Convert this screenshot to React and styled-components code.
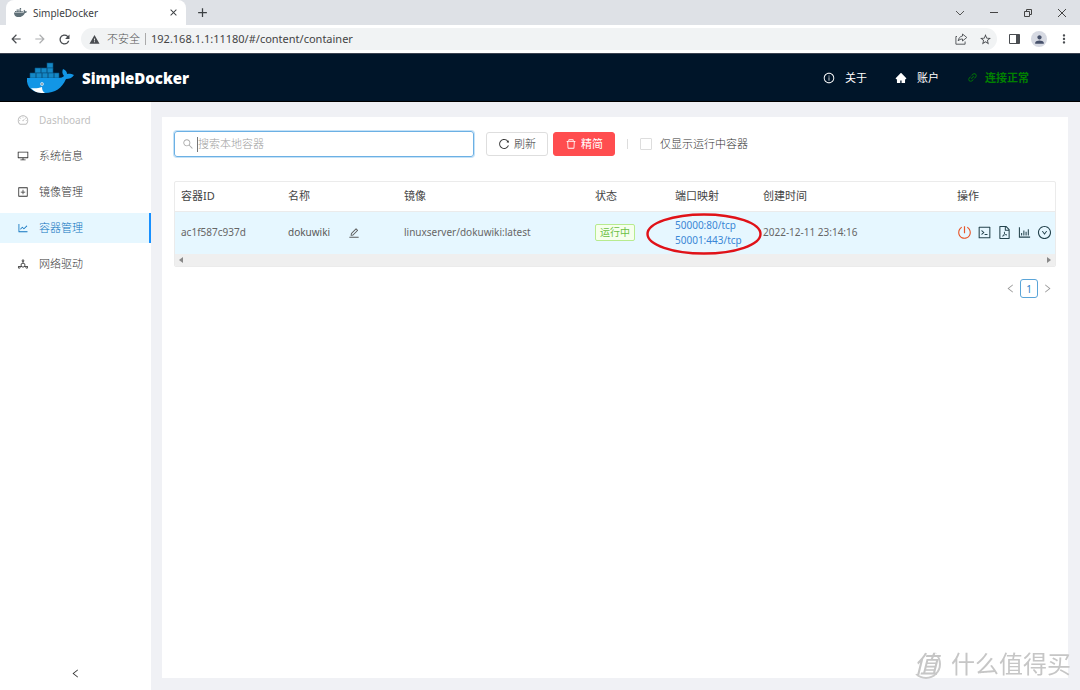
import React, { useState } from "react";
import styled, { createGlobalStyle, css } from "styled-components";
import {
    AiFillHome,
    AiOutlineBarChart,
    AiOutlineCode,
    AiOutlineDashboard,
    AiOutlineDelete,
    AiOutlineDeploymentUnit,
    AiOutlineDesktop,
    AiOutlineDownCircle,
    AiOutlineEdit,
    AiOutlineFilePdf,
    AiOutlineInfoCircle,
    AiOutlineLeft,
    AiOutlineLineChart,
    AiOutlineLink,
    AiOutlinePlusSquare,
    AiOutlinePoweroff,
    AiOutlineReload,
    AiOutlineRight,
    AiOutlineSearch
} from "react-icons/ai";
import { FaDocker } from "react-icons/fa";
import {
    MdAdd,
    MdArrowBack,
    MdArrowForward,
    MdClose,
    MdMoreVert,
    MdPerson,
    MdRefresh,
    MdStarBorder,
    MdWarning
} from "react-icons/md";

const GlobalStyle = createGlobalStyle`
    * {
        box-sizing: border-box;
    }
    body {
        margin: 0;
        font-family: "Noto Sans", "Noto Sans CJK SC", sans-serif;
        font-size: 11px;
        line-height: 16px;
        color: #666;
        background: #f0f1f5;
    }
    button, input {
        font: inherit;
        color: inherit;
    }
    button {
        padding: 0;
        border: 0;
        background: none;
        cursor: pointer;
    }
    a {
        color: inherit;
        text-decoration: none;
    }
    svg {
        display: block;
        flex: none;
    }
`;

const Page = styled.div`
    min-height: 100vh;
    display: flex;
    flex-direction: column;
`;

/* browser */

const TabStrip = styled.div`
    height: 25px;
    display: flex;
    align-items: center;
    padding-left: 6px;
    background: #dee1e6;
    color: #3c4043;
`;

const Tab = styled.div`
    width: 180px;
    height: 25px;
    display: flex;
    align-items: center;
    gap: 6px;
    padding: 0 6px 0 8px;
    border-radius: 8px 8px 0 0;
    background: #fff;
    font-size: 10px;
    span {
        flex: 1;
    }
`;

const NewTab = styled.button`
    margin-left: 9px;
`;

const WindowButtons = styled.div`
    margin-left: auto;
    display: flex;
    gap: 22px;
    padding-right: 12px;
    button {
        width: 12px;
        height: 12px;
    }
`;

const Toolbar = styled.div`
    height: 28px;
    display: flex;
    align-items: center;
    gap: 10px;
    padding: 0 9px;
    background: #fff;
    color: #4a4d51;
`;

const IconButton = styled.button`
    width: 14px;
    display: flex;
    align-items: center;
    justify-content: center;
    opacity: ${props => (props.$faded ? 0.45 : 1)};
`;

const AddressBar = styled.div`
    flex: 1;
    height: 22px;
    display: flex;
    align-items: center;
    padding: 0 5px 0 8px;
    border-radius: 11px;
    background: #f1f3f4;
`;

const Insecure = styled.span`
    margin-left: 7px;
    padding-right: 5px;
    border-right: 1px solid #aaa;
    line-height: 12px;
    color: #555;
    font-weight: 300;
`;

const Url = styled.input`
    flex: 1;
    min-width: 0;
    margin-left: 5px;
    padding: 0;
    border: 0;
    outline: 0;
    background: none;
    color: #444;
`;

const AddressActions = styled.div`
    display: flex;
    gap: 10px;
`;

const Avatar = styled.button`
    width: 16px;
    height: 16px;
    display: grid;
    place-items: center;
    border-radius: 50%;
    background: #d6d9e2;
    color: #46506a;
`;

/* app header */

const Header = styled.header`
    height: 49px;
    display: flex;
    align-items: center;
    padding: 0 51px 0 26px;
    border-top: 1px solid #3b4250;
    border-bottom: 1px solid #000;
    background: #001529;
    color: #fff;
`;

const Brand = styled.h1`
    margin: 0 0 0 8px;
    font-family: "Open Sans", "Noto Sans", sans-serif;
    font-size: 15px;
    font-weight: 800;
`;

const HeaderNav = styled.nav`
    margin-left: auto;
    display: flex;
    gap: 28px;
`;

const HeaderLink = styled.a`
    display: flex;
    align-items: center;
    gap: 10px;
    ${props => props.$ok && css`
        gap: 7px;
        color: #008000;
        font-weight: 700;
    `}
`;

/* side menu */

const Body = styled.div`
    flex: 1;
    display: flex;
`;

const Sidebar = styled.aside`
    width: 151px;
    display: flex;
    flex-direction: column;
    align-items: stretch;
    padding-top: 3px;
    background: #fff;
`;

const MenuLink = styled.a`
    height: 30px;
    display: flex;
    align-items: center;
    gap: 10px;
    margin-bottom: 6px;
    padding-left: 17px;
    border-right: 2px solid transparent;
    color: #333;
    font-weight: 300;
    ${props => props.$disabled && css`
        color: #bfbfbf;
        font-size: 10px;
        font-weight: 400;
    `}
    ${props => props.$active && css`
        border-color: #1890ff;
        background: #e6f7ff;
        color: #0f74c0;
    `}
`;

const Collapse = styled.button`
    height: 34px;
    display: grid;
    place-items: center;
    margin-top: auto;
    color: #333;
`;

/* content */

const Content = styled.main`
    flex: 1;
    display: flex;
    min-width: 0;
    padding: 15px 12px 12px 11px;
`;

const Card = styled.section`
    flex: 1;
    min-width: 0;
    padding: 14px 12px;
    background: #fff;
`;

const Filters = styled.div`
    display: flex;
    align-items: center;
    margin-bottom: 24px;
    font-weight: 300;
`;

const SearchBox = styled.label`
    flex: 0 1 300px;
    height: 26px;
    display: flex;
    align-items: center;
    gap: 3px;
    margin-right: 12px;
    padding: 0 7px;
    border: 1px solid #6cb0e4;
    border-radius: 3px;
    box-shadow: 0 0 0 1px #c5e2f7;
    color: #aaa;
    input {
        flex: 1;
        min-width: 0;
        padding: 0;
        border: 0;
        outline: 0;
        color: #555;
    }
    input::placeholder {
        color: #a0a0a0;
    }
`;

const Caret = styled.i`
    width: 1px;
    height: 15px;
    margin-right: -3px;
    background: #777;
`;

const Button = styled.button`
    width: 62px;
    height: 24px;
    display: flex;
    align-items: center;
    justify-content: center;
    gap: 4px;
    margin-right: 5px;
    border: 1px solid ${props => (props.$danger ? "#ff4d4f" : "#dedede")};
    border-radius: 3px;
    background: ${props => (props.$danger ? "#ff4d4f" : "#fff")};
    color: ${props => (props.$danger ? "#fff" : "#333")};
    font-weight: ${props => (props.$danger ? 400 : 300)};
`;

const Divider = styled.span`
    width: 1px;
    height: 10px;
    margin: 0 12px 0 7px;
    background: #ddd;
`;

const Check = styled.label`
    display: flex;
    align-items: center;
    gap: 8px;
    color: #333;
    input {
        appearance: none;
        width: 12px;
        height: 12px;
        margin: 0;
        border: 1px solid #ddd;
        border-radius: 1px;
        background: #fff;
    }
    input:checked {
        background: #1890ff;
    }
`;

const TableWrap = styled.div`
    overflow: hidden;
    border: 1px solid #ebebeb;
    border-radius: 2px;
`;

const Table = styled.table`
    width: 100%;
    table-layout: fixed;
    border-collapse: collapse;
    th, td {
        padding: 0 6px;
        text-align: left;
        white-space: nowrap;
    }
    th {
        height: 29px;
        border-bottom: 1px solid #ebebeb;
        color: #444;
        font-weight: 400;
    }
    td {
        height: 43px;
        background: #e6f7ff;
        font-size: 10px;
        line-height: 15px;
    }
`;

const Name = styled.div`
    display: flex;
    align-items: center;
    gap: 18px;
    color: #595959;
`;

const Tag = styled.span`
    display: inline-block;
    padding: 0 4px;
    border: 1px solid #b7eb8f;
    border-radius: 2px;
    background: #f6ffed;
    color: #6cbf45;
`;

const Ports = styled.div`
    position: relative;
    display: flex;
    flex-direction: column;
    color: #3a87d6;
`;

const Mark = styled.svg`
    position: absolute;
    top: -5px;
    left: -29px;
    pointer-events: none;
`;

const Actions = styled.div`
    display: flex;
    gap: 5px;
    color: #24434d;
`;

const ScrollBar = styled.div`
    height: 12px;
    display: flex;
    align-items: center;
    justify-content: space-between;
    padding: 0 4px;
    background: #efefef;
    color: #888;
`;

const Pagination = styled.nav`
    display: flex;
    align-items: center;
    justify-content: flex-end;
    gap: 4px;
    margin-top: 12px;
    padding-right: 3px;
    color: #999;
`;

const PageNumber = styled.button`
    width: 18px;
    height: 19px;
    border: 1px solid #5ba5d8;
    border-radius: 3px;
    color: #2f80c8;
    font-size: 10px;
`;

const Watermark = styled.div`
    position: fixed;
    right: 9px;
    bottom: 10px;
    display: flex;
    align-items: center;
    gap: 10px;
    color: #c6c6c6;
    font-size: 24px;
    line-height: 32px;
    text-shadow: -1px -1px 0 #fff;
    pointer-events: none;
`;

const Seal = styled.span`
    width: 30px;
    height: 30px;
    display: flex;
    align-items: center;
    justify-content: center;
    border: 2px solid transparent;
    border-right-color: #cacaca;
    border-bottom-color: #cacaca;
    border-radius: 50%;
    font-weight: 500;
    font-style: italic;
`;

const menu = [
    { text: "Dashboard", icon: AiOutlineDashboard, disabled: true },
    { text: "系统信息", icon: AiOutlineDesktop },
    { text: "镜像管理", icon: AiOutlinePlusSquare },
    { text: "容器管理", icon: AiOutlineLineChart, active: true },
    { text: "网络驱动", icon: AiOutlineDeploymentUnit }
];

const containers = [
    {
        id: "ac1f587c937d",
        name: "dokuwiki",
        image: "linuxserver/dokuwiki:latest",
        state: "运行中",
        ports: ["50000:80/tcp", "50001:443/tcp"],
        created: "2022-12-11 23:14:16"
    }
];

const Whale = () => (
    <svg width="48" height="32" viewBox="0 0 48 32">
        <g fill="#1488c6" stroke="#07527f" strokeWidth="0.6">
            <rect x="21" y="1" width="6" height="5" />
            <path d="M9 6h6v5H9zM15 6h6v5h-6zM21 6h6v5h-6z" />
            <path d="M4 11h6v5H4zM10 11h6v5h-6zM16 11h6v5h-6zM22 11h6v5h-6zM28 11h5v5h-5z" />
        </g>
        <path
            fill="#1296e6"
            d="M1 16h31c3 0 5-1 6-2-2-2-2-5-1-7 3 1 4 3 4 5 2-.6 5 0 7 1-2 3-5 4-8 4-4 9-11 14-21 14C7 31 0 26 1 16z"
        />
        <path fill="#fff" d="M5 26c4 .6 8 0 11-1 0 3 1 5 3 6-6 .3-11-1-14-5z" />
        <circle cx="16" cy="22" r="1.7" fill="#fff" />
        <circle cx="16" cy="22" r="0.8" fill="#174563" />
    </svg>
);

const BrowserBar = () => (
    <>
        <TabStrip>
            <Tab>
                <FaDocker size={13} color="#607078" />
                <span>SimpleDocker</span>
                <IconButton aria-label="关闭标签页"><MdClose size={11} /></IconButton>
            </Tab>
            <NewTab aria-label="新标签页"><MdAdd size={15} /></NewTab>
            <WindowButtons>
                <button aria-label="搜索标签页">
                    <svg width="12" height="12" fill="none" stroke="#555"><path d="M2 4l4 4 4-4" /></svg>
                </button>
                <button aria-label="最小化">
                    <svg width="12" height="12" fill="none" stroke="#444"><path d="M2 5.5h8" /></svg>
                </button>
                <button aria-label="还原">
                    <svg width="12" height="12" fill="none" stroke="#444"><path d="M2.500 4.500h5v5h-5zM4.500 4.500v-2h5v5h-2" /></svg>
                </button>
                <button aria-label="关闭">
                    <svg width="12" height="12" fill="none" stroke="#444"><path d="M2 2l8 8M10 2l-8 8" /></svg>
                </button>
            </WindowButtons>
        </TabStrip>
        <Toolbar>
            <IconButton aria-label="后退"><MdArrowBack size={14} /></IconButton>
            <IconButton aria-label="前进" $faded><MdArrowForward size={14} /></IconButton>
            <IconButton aria-label="重新加载"><MdRefresh size={15} /></IconButton>
            <AddressBar>
                <MdWarning size={11} />
                <Insecure>不安全</Insecure>
                <Url aria-label="地址" defaultValue="192.168.1.1:11180/#/content/container" />
                <AddressActions>
                    <IconButton aria-label="分享">
                        <svg width="13" height="12" viewBox="0 0 13 12" fill="none" stroke="currentColor" strokeWidth="0.9">
                            <path d="M2 3.500H.9v7.700h9.200V8.500" />
                            <path d="M7.500 1l4.300 3.500-4.300 3.500V6c-2 0-3.300.6-4.300 2 .3-2.700 1.700-4.600 4.300-5z" />
                        </svg>
                    </IconButton>
                    <IconButton aria-label="收藏"><MdStarBorder size={13} /></IconButton>
                </AddressActions>
            </AddressBar>
            <IconButton aria-label="侧边栏">
                <svg width="11" height="10" fill="none" stroke="currentColor">
                    <path d="M.5.5h10v9H.5z" />
                    <path fill="currentColor" d="M7.500 1h3v8h-3z" />
                </svg>
            </IconButton>
            <Avatar aria-label="用户"><MdPerson size={13} /></Avatar>
            <IconButton aria-label="菜单"><MdMoreVert size={14} /></IconButton>
        </Toolbar>
    </>
);

const ContainerRow = ({ id, name, image, state, ports, created }) => (
    <tr>
        <td>{id}</td>
        <td>
            <Name>
                {name}
                <button aria-label="重命名"><AiOutlineEdit size={12} /></button>
            </Name>
        </td>
        <td>{image}</td>
        <td><Tag>{state}</Tag></td>
        <td>
            <Ports>
                {ports.map(port => <a key={port} href="#port">{port}</a>)}
                <Mark width="116" height="42" viewBox="0 0 116 42">
                    <ellipse cx="58" cy="21" rx="56.5" ry="19.5" fill="none" stroke="#e01218" strokeWidth="2.4" />
                </Mark>
            </Ports>
        </td>
        <td>{created}</td>
        <td>
            <Actions>
                <button aria-label="停止"><AiOutlinePoweroff size={15} color="#e8562a" /></button>
                <button aria-label="终端"><AiOutlineCode size={15} /></button>
                <button aria-label="日志"><AiOutlineFilePdf size={15} /></button>
                <button aria-label="监控"><AiOutlineBarChart size={15} /></button>
                <button aria-label="更多"><AiOutlineDownCircle size={15} /></button>
            </Actions>
        </td>
    </tr>
);

const App = () => {
    const [keyword, setKeyword] = useState("");
    const [onlyRunning, setOnlyRunning] = useState(false);

    return (
        <Page>
            <GlobalStyle />
            <BrowserBar />
            <Header>
                <Whale />
                <Brand>SimpleDocker</Brand>
                <HeaderNav>
                    <HeaderLink href="#about"><AiOutlineInfoCircle size={12} />关于</HeaderLink>
                    <HeaderLink href="#account"><AiFillHome size={12} />账户</HeaderLink>
                    <HeaderLink href="#status" $ok><AiOutlineLink size={11} />连接正常</HeaderLink>
                </HeaderNav>
            </Header>
            <Body>
                <Sidebar>
                    {menu.map(({ text, icon: Icon, disabled, active }) => (
                        <MenuLink key={text} href="#menu" $disabled={disabled} $active={active}>
                            <Icon size={12} />
                            {text}
                        </MenuLink>
                    ))}
                    <Collapse aria-label="收起"><AiOutlineLeft size={11} /></Collapse>
                </Sidebar>
                <Content>
                    <Card>
                        <Filters>
                            <SearchBox>
                                <AiOutlineSearch size={12} />
                                <Caret />
                                <input
                                    aria-label="搜索本地容器"
                                    placeholder="搜索本地容器"
                                    value={keyword}
                                    onChange={e => setKeyword(e.target.value)}
                                />
                            </SearchBox>
                            <Button><AiOutlineReload size={12} />刷新</Button>
                            <Button $danger><AiOutlineDelete size={12} />精简</Button>
                            <Divider />
                            <Check>
                                <input
                                    type="checkbox"
                                    checked={onlyRunning}
                                    onChange={e => setOnlyRunning(e.target.checked)}
                                />
                                仅显示运行中容器
                            </Check>
                        </Filters>
                        <TableWrap>
                            <Table>
                                <colgroup>
                                    <col width="107" />
                                    <col width="116" />
                                    <col />
                                    <col width="80" />
                                    <col width="88" />
                                    <col width="194" />
                                    <col width="104" />
                                </colgroup>
                                <thead>
                                    <tr>
                                        <th>容器ID</th>
                                        <th>名称</th>
                                        <th>镜像</th>
                                        <th>状态</th>
                                        <th>端口映射</th>
                                        <th>创建时间</th>
                                        <th>操作</th>
                                    </tr>
                                </thead>
                                <tbody>
                                    {containers.map(item => <ContainerRow key={item.id} {...item} />)}
                                </tbody>
                            </Table>
                            <ScrollBar>
                                <svg width="4" height="6" fill="currentColor"><path d="M4 0v6L0 3z" /></svg>
                                <svg width="4" height="6" fill="currentColor"><path d="M0 0v6l4-3z" /></svg>
                            </ScrollBar>
                        </TableWrap>
                        <Pagination aria-label="分页">
                            <button aria-label="上一页"><AiOutlineLeft size={11} /></button>
                            <PageNumber>1</PageNumber>
                            <button aria-label="下一页"><AiOutlineRight size={11} /></button>
                        </Pagination>
                    </Card>
                </Content>
            </Body>
            <Watermark>
                <Seal>值</Seal>
                <span>什么值得买</span>
            </Watermark>
        </Page>
    );
};

export default App;
